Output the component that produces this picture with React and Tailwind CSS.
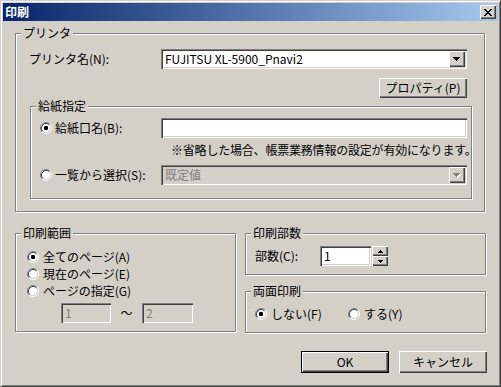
import React from "react";

const raised =
  "bg-[#d4d0c8] shadow-[inset_1px_1px_0_#fff,inset_-1px_-1px_0_#404040,inset_-2px_-2px_0_#808080]";
const sunken =
  "shadow-[inset_1px_1px_0_#808080,inset_2px_2px_0_#404040,inset_-1px_-1px_0_#fff,inset_-2px_-2px_0_#d4d0c8]";

function Group({ title, className, children }) {
  return (
    <div
      className={`relative border border-[#808080] shadow-[inset_1px_1px_0_#fff,1px_1px_0_#fff] ${className}`}
    >
      <span className="absolute left-[5px] top-[-8px] bg-[#d4d0c8] px-[2px] leading-[14px]">
        {title}
      </span>
      {children}
    </div>
  );
}

function Radio({ checked }) {
  return (
    <svg width="12" height="12" viewBox="0 0 12 12" className="shrink-0">
      <circle cx="6" cy="6" r="4.5" fill="#fff" />
      <path d="M2.11 9.89 A5.5 5.5 0 0 1 9.89 2.11" fill="none" stroke="#808080" />
      <path d="M9.89 2.11 A5.5 5.5 0 0 1 2.11 9.89" fill="none" stroke="#fff" />
      <path d="M2.82 9.18 A4.5 4.5 0 0 1 9.18 2.82" fill="none" stroke="#404040" />
      <path d="M9.18 2.82 A4.5 4.5 0 0 1 2.82 9.18" fill="none" stroke="#d4d0c8" />
      {checked && <rect x="4" y="4" width="4" height="4" rx="1" fill="#000" />}
    </svg>
  );
}

function DownArrow({ disabled }) {
  const c = disabled ? "#808080" : "#000";
  return (
    <svg width="8" height="5" viewBox="0 0 8 5" shapeRendering="crispEdges">
      {disabled && (
        <g fill="#fff">
          <rect x="1" y="1" width="7" height="1" />
          <rect x="2" y="2" width="5" height="1" />
          <rect x="3" y="3" width="3" height="1" />
          <rect x="4" y="4" width="1" height="1" />
        </g>
      )}
      <g fill={c}>
        <rect x="0" y="0" width="7" height="1" />
        <rect x="1" y="1" width="5" height="1" />
        <rect x="2" y="2" width="3" height="1" />
        <rect x="3" y="3" width="1" height="1" />
      </g>
    </svg>
  );
}

function Combo({ value, disabled, className }) {
  return (
    <div
      className={`flex h-[20px] items-center ${sunken} ${
        disabled ? "bg-[#d4d0c8] text-[#808080]" : "bg-white text-black"
      } ${className}`}
    >
      <span className="flex-1 pl-[4px] leading-[14px]">{value}</span>
      <div className={`mr-[2px] flex h-[16px] w-[16px] items-center justify-center pt-[1px] ${raised}`}>
        <DownArrow disabled={disabled} />
      </div>
    </div>
  );
}

function Field({ value, disabled, className }) {
  return (
    <div
      className={`flex h-[20px] items-center pl-[4px] leading-[14px] ${sunken} ${
        disabled ? "bg-[#d4d0c8] text-[#808080]" : "bg-white text-black"
      } ${className}`}
    >
      {value}
    </div>
  );
}

export default function App() {
  return (
    <div className="h-[387px] w-[501px] border border-t-[#d4d0c8] border-l-[#d4d0c8] border-r-[#404040] border-b-[#404040] bg-[#d4d0c8] p-[2px] font-['MS_UI_Gothic','Noto_Sans_CJK_JP',sans-serif] text-[12px] text-black shadow-[inset_1px_1px_0_#fff,inset_-1px_-1px_0_#808080]">
      {/* title bar */}
      <div className="flex h-[18px] items-center justify-between bg-linear-to-r from-[#0a246a] to-[#a6caf0] pl-[2px] pr-[2px]">
        <span className="font-bold leading-[14px] text-white">印刷</span>
        <div className={`flex h-[14px] w-[16px] items-center justify-center ${raised}`}>
          <svg width="8" height="7" viewBox="0 0 8 7" shapeRendering="crispEdges" fill="#000">
            <rect x="0" y="0" width="2" height="1" />
            <rect x="6" y="0" width="2" height="1" />
            <rect x="1" y="1" width="2" height="1" />
            <rect x="5" y="1" width="2" height="1" />
            <rect x="2" y="2" width="4" height="1" />
            <rect x="3" y="3" width="2" height="1" />
            <rect x="2" y="4" width="4" height="1" />
            <rect x="1" y="5" width="2" height="1" />
            <rect x="5" y="5" width="2" height="1" />
            <rect x="0" y="6" width="2" height="1" />
            <rect x="6" y="6" width="2" height="1" />
          </svg>
        </div>
      </div>

      <div className="pl-[12px] pt-[12px]">
        {/* プリンタ */}
        <Group title="プリンタ" className="h-[179px] w-[470px]">
          <div className="pr-[17px] pt-[15px]">
            <div className="flex h-[20px] items-center pl-[13px]">
              <span className="w-[132px] leading-[14px]">プリンタ名(N):</span>
              <Combo value="FUJITSU XL-5900_Pnavi2" className="w-[306px]" />
            </div>
            <div className="mt-[9px] flex justify-end">
              <button className={`h-[20px] w-[88px] leading-[14px] ${raised}`}>プロパティ(P)</button>
            </div>
          </div>

          <Group title="給紙指定" className="ml-[14px] mt-[8px] h-[93px] w-[442px]">
            <div className="pl-[9px] pt-[11px]">
              <div className="flex h-[20px] items-center">
                <div className="flex w-[121px] items-center gap-[3px]">
                  <Radio checked />
                  <span className="leading-[14px]">給紙口名(B):</span>
                </div>
                <Field value="" className="w-[306px]" />
              </div>
              <div className="mt-[5px] h-[14px] whitespace-nowrap pl-[131px] leading-[14px] tracking-[-0.2px]">
                ※省略した場合、帳票業務情報の設定が有効になります。
              </div>
              <div className="mt-[8px] flex h-[20px] items-center">
                <div className="flex w-[121px] items-center gap-[3px]">
                  <Radio />
                  <span className="leading-[14px]">一覧から選択(S):</span>
                </div>
                <Combo value="既定値" disabled className="w-[306px]" />
              </div>
            </div>
          </Group>
        </Group>

        {/* bottom groups */}
        <div className="mt-[21px] flex gap-[9px]">
          <Group title="印刷範囲" className="h-[99px] w-[221px]">
            <div className="pl-[11px] pt-[14px]">
              <div className="flex h-[17px] items-center gap-[4px]">
                <Radio checked />
                <span className="leading-[14px]">全てのページ(A)</span>
              </div>
              <div className="flex h-[17px] items-center gap-[4px]">
                <Radio />
                <span className="leading-[14px]">現在のページ(E)</span>
              </div>
              <div className="flex h-[17px] items-center gap-[4px]">
                <Radio />
                <span className="leading-[14px]">ページの指定(G)</span>
              </div>
              <div className="mt-[4px] flex items-center pl-[34px]">
                <Field value="1" disabled className="w-[50px]" />
                <span className="w-[31px] text-center leading-[14px]">～</span>
                <Field value="2" disabled className="w-[51px]" />
              </div>
            </div>
          </Group>

          <div className="flex flex-col">
            <Group title="印刷部数" className="h-[42px] w-[241px]">
              <div className="flex items-center pl-[9px] pt-[12px]">
                <span className="w-[65px] leading-[14px]">部数(C):</span>
                <Field value="1" className="w-[51px]" />
                <div className="ml-[1px] flex h-[20px] w-[16px] flex-col">
                  <div className={`flex h-[10px] items-center justify-center ${raised}`}>
                    <svg width="5" height="3" viewBox="0 0 5 3" shapeRendering="crispEdges" fill="#000">
                      <rect x="2" y="0" width="1" height="1" />
                      <rect x="1" y="1" width="3" height="1" />
                      <rect x="0" y="2" width="5" height="1" />
                    </svg>
                  </div>
                  <div className={`flex h-[10px] items-center justify-center ${raised}`}>
                    <svg width="5" height="3" viewBox="0 0 5 3" shapeRendering="crispEdges" fill="#000">
                      <rect x="0" y="0" width="5" height="1" />
                      <rect x="1" y="1" width="3" height="1" />
                      <rect x="2" y="2" width="1" height="1" />
                    </svg>
                  </div>
                </div>
              </div>
            </Group>

            <Group title="両面印刷" className="mt-[16px] h-[42px] w-[241px]">
              <div className="flex items-center pl-[9px] pt-[14px]">
                <div className="flex h-[16px] w-[93px] items-center gap-[4px]">
                  <Radio checked />
                  <span className="leading-[14px]">しない(F)</span>
                </div>
                <div className="flex h-[16px] items-center gap-[4px]">
                  <Radio />
                  <span className="leading-[14px]">する(Y)</span>
                </div>
              </div>
            </Group>
          </div>
        </div>

        {/* buttons */}
        <div className="mt-[18px] flex justify-end gap-[10px] pr-[11px]">
          <button className="h-[22px] w-[88px] border border-black p-0">
            <div className={`flex h-full w-full items-center justify-center leading-[14px] ${raised}`}>OK</div>
          </button>
          <button className={`h-[22px] w-[88px] leading-[14px] ${raised}`}>キャンセル</button>
        </div>
      </div>
    </div>
  );
}
